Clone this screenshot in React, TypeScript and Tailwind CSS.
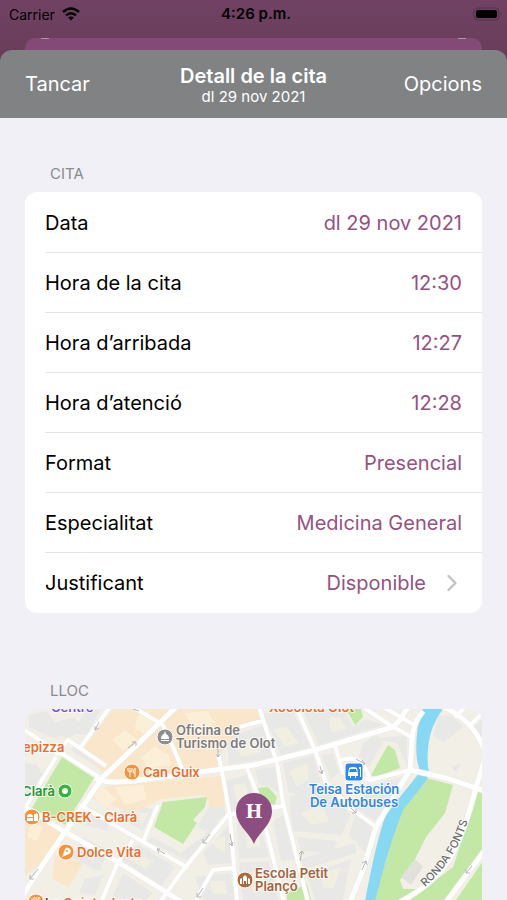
import { ChevronRight } from 'lucide-react';

interface Detail {
  label: string;
  value: string;
  link?: boolean;
}

const details: Detail[] = [
  { label: 'Data', value: 'dl 29 nov 2021' },
  { label: 'Hora de la cita', value: '12:30' },
  { label: 'Hora d’arribada', value: '12:27' },
  { label: 'Hora d’atenció', value: '12:28' },
  { label: 'Format', value: 'Presencial' },
  { label: 'Especialitat', value: 'Medicina General' },
  { label: 'Justificant', value: 'Disponible', link: true },
];

const commercial = [
  'M88 0H232L236 14 212 22 194 48 196 60 108 70 84 72 58 40Z',
  'M82 77 196 67 200 96 186 100 180 86 136 90 108 104 62 88Z',
  'M0 102 32 118 37 126 14 156 0 166Z',
  'M30 146 58 154 44 178 27 170Z',
];

const commercialLight = [
  'M112 8 122 2 132 14 122 26 110 20Z',
  'M88 30 100 22 112 30 98 42Z',
  'M116 48 130 38 144 46 146 56 122 60Z',
  'M160 4 182 2 190 14 170 24Z',
  'M90 78 118 76 122 90 100 96Z',
  'M64 84 78 78 92 90 82 98Z',
  'M6 114 18 118 12 132 2 128Z',
];

const buildings = [
  'M4 6 22 2 30 14 48 8 60 18 46 28 30 30 4 18Z',
  'M0 54 12 56 20 66 0 88Z',
  'M60 2 76 0 62 26 48 24Z',
  'M52 38 76 52 72 58 44 40Z',
  'M64 104 84 112 82 122 60 116Z',
  'M94 102 112 96 128 100 118 122 100 112Z',
  'M58 128 84 142 74 162 46 148Z',
  'M96 144 114 136 150 158 136 178 98 154Z',
  'M60 170 78 166 70 186 54 184Z',
  'M98 164 128 184 120 191H86Z',
  'M128 128 156 144 166 136 178 128 188 112 198 116 164 152 122 132Z',
  'M186 94 200 98 200 106 180 122 172 118Z',
  'M200 72 222 66 230 94 206 102Z',
  'M178 144 204 116 206 154 184 156Z',
  'M212 114 234 112 244 148 214 150Z',
  'M170 168 188 166 206 164 210 191H178Z',
  'M214 154 244 152 254 191H218Z',
  'M238 4 268 2 286 38 256 46Z',
  'M202 28 240 16 250 48 204 56Z',
  'M278 2 318 0 328 18 340 10 358 16 294 36Z',
  'M230 60 250 58 256 86 246 78 234 76Z',
  'M258 54 288 46 296 72 278 86 264 84Z',
  'M296 46 308 44 314 64 306 70Z',
  'M264 88 298 76 326 106 316 126 268 122Z',
  'M330 106 350 120 340 144 324 126Z',
  'M346 76 376 68 366 90 350 112 330 98Z',
  'M272 128 312 132 308 144 276 142Z',
  'M276 150 330 134 332 144 280 160Z',
  'M282 166 326 150 318 191H290Z',
  'M248 112 258 106 270 150 256 152Z',
  'M346 30 382 26 382 56 372 34 360 32Z',
  'M338 34 352 26 358 34 344 58 334 46Z',
  'M414 6 428 8 438 18 418 34 408 26Z',
  'M444 22 458 34V10Z',
  'M426 58 436 54 432 64Z',
];

const yards = [
  'M22 30 40 26 36 36Z',
  'M14 62 26 52 22 68Z',
  'M112 104 124 104 116 118Z',
  'M62 132 76 140 68 152 56 142Z',
  'M108 142 128 152 120 160 104 150Z',
  'M208 76 220 74 224 88 212 92Z',
  'M186 134 200 126 200 144Z',
  'M220 122 232 118 236 136 222 140Z',
  'M210 34 228 28 236 44 216 48Z',
  'M248 20 262 18 274 34 260 38Z',
  'M304 8 314 8 322 20 306 24Z',
  'M264 62 282 54 284 70 272 78Z',
  'M276 104 296 96 304 112 286 116Z',
  'M296 164 316 158 308 180 298 178Z',
  'M184 172 200 172 202 186 188 184Z',
  'M224 164 238 160 244 180 228 184Z',
];

const parks = [
  'M37 48 69 69 40 116 7 99Z',
  'M138 93 182 88 180 98 168 111 172 114 158 135 129 118Z',
  'M321 0 330 16 338 8 336 0Z',
  'M346 66 363 36 370 41 375 59 350 68Z',
  'M232 79 243 78 252 88 250 95 238 96Z',
  'M262 184 282 175 286 191H262Z',
  'M401 69 428 76 420 104 401 128 388 154 375 171 378 180 392 180 374 191H345L362 150 370 110Z',
  'M453 83 458 84V141L421 191H385L428 158Z',
  'M458 152V191H431Z',
];

const roads = [
  'M-2 20 25 38 36 44 74 68',
  'M31 46 43 31 81 57',
  'M-2 102 31 48',
  'M108 -2 138 16 148 38 158 62',
  'M55 39 85 -2',
  'M55 96 103 124 163 159',
  'M133 96 118 133',
  'M108 131 93 153 77 191',
  'M193 44 198 68 205 108 212 193',
  'M258 97 203 106 158 161 135 193',
  'M208 159 188 161 170 193',
  'M222 59 232 84 242 124 259 193',
  'M234 -2 252 54 258 94 283 193',
  'M215 18 240 11',
  'M271 -2 290 41 301 74 328 101 351 118',
  'M310 36 318 64 345 71 385 61',
  'M316 51Q338 44 345 71',
  'M338 -2 365 16 388 29',
  'M358 -2 391 17',
  'M430 8 440 -2M443 18 460 2',
];

const mainRoads = [
  'M-2 186 12 164 40 123 78 68 115 33 151 -2',
  'M0 98 40 123 93 153 157 193',
  'M70 69Q78 75 108 72L175 63 229 56 290 41 368 18 375 11 383 -2',
  'M398 2Q388 14 387 30L385 61 371 84 351 118 338 161 325 193',
  'M385 61 421 69 460 82',
  'M418 -2Q448 10 460 42',
  'M460 50 451 78Q442 116 428 144T375 193',
  'M460 141 421 193',
];

const arrows = [
  'M74 13 70 21M70 17V21L74 19',
  'M103 39 111 33M107 33H111V37',
  'M114 2 108 0M193 38V48M191 45 193 48 195 45',
  'M132 140 140 145M135 140 132 140 134 144',
  'M185 125 178 134M178 130V134H182',
  'M205 125 207 137M204 134 207 137 208 133',
  'M13 160 5 170M5 166V170H9',
  'M178 179 172 188M172 184V188H176',
  'M295 57 297 65M294 62 297 65 298 61',
  'M275 152 277 142M274 145 277 142 279 145',
  'M326 99 331 104M331 100V104H327',
  'M337 161 341 152M337 154 341 152 342 156',
  'M331 50 340 55M337 51 340 55 335 56',
  'M447 157 441 164M441 160V164H445',
];

function WifiIcon() {
  return (
    <svg width="18" height="14" viewBox="0 0 18 14" fill="none" stroke="black" strokeWidth="2.4">
      <path d="M1 5Q9 -2 17 5" />
      <path d="M4 8.400Q9 4 14 8.400" />
      <path d="M9 13.500 6.200 10.600Q9 8.300 11.800 10.600Z" fill="black" stroke="none" />
    </svg>
  );
}

function BatteryIcon() {
  return (
    <svg width="30" height="14" viewBox="0 0 30 14">
      <rect x="1" y="1" width="25" height="12" rx="4" fill="none" stroke="#553049" strokeWidth="1" />
      <rect x="3" y="3" width="21" height="8" rx="2" fill="black" />
      <path d="M27.500 5Q29.500 7 27.500 9Z" fill="#553049" />
    </svg>
  );
}

function StatusBar() {
  return (
    <div className="grid h-7 grid-cols-[1fr_auto_1fr] items-center pr-1 pl-[9px] text-[14px] text-black">
      <div className="flex items-center gap-[7px]">
        <span>Carrier</span>
        <WifiIcon />
      </div>
      <span className="text-[15px] font-semibold">4:26 p.m.</span>
      <div className="flex justify-end">
        <BatteryIcon />
      </div>
    </div>
  );
}

function LocationMap() {
  return (
    <svg
      className="block h-full w-full"
      viewBox="0 0 457 191"
      preserveAspectRatio="xMidYMin slice"
      role="img"
      aria-label="Mapa"
    >
      <rect width="460" height="400" fill="#f2efe7" />
      <path d={buildings.join('')} fill="#e8e8e7" />
      <path d={yards.join('')} fill="#f1eee2" />
      <path d={commercial.join('')} fill="#fae6ca" />
      <path d={commercialLight.join('')} fill="#fcefd8" />
      <path d={parks.join('')} fill="#c3e8a6" />
      <path d="M376 168 390 150 398 158 386 176Z" fill="#e2e0da" />
      <path
        d="M398 -1Q389 24 392 51L395 63 375 88 361 106Q352 128 340 192H350Q358 160 368 128L378 101 401 72Q405 66 403 58 400 22 419 -1Z"
        fill="#87d8f3"
      />

      <g fill="none" strokeLinejoin="round">
        <path d={roads.join('')} stroke="#e9e8e5" strokeWidth="5" />
        <path d={mainRoads.join('')} stroke="#e9e8e5" strokeWidth="6" />
        <path d={roads.join('')} stroke="white" strokeWidth="4" />
        <path d={mainRoads.join('')} stroke="white" strokeWidth="5" />
        <path d={arrows.join('')} stroke="#b4b4b4" strokeWidth="1" />
      </g>

      <g className="text-[13px] font-semibold" stroke="white" strokeWidth="2" strokeOpacity="0.7" paintOrder="stroke">
        <text x="26" y="3" fill="#7d4df2">Centre</text>
        <text x="244" y="3" fill="#ee6c26">Xocolota Olot</text>
        <text x="-2" y="43" fill="#ee6c26">epizza</text>
        <text x="118" y="68" fill="#ee6c26">Can Guix</text>
        <text x="17" y="113" fill="#ee6c26">B-CREK - Clarà</text>
        <text x="52" y="148" fill="#ee6c26">Dolce Vita</text>
        <text x="20" y="199" fill="#ee6c26"><tspan fill="#704226">La</tspan> Quinta Justa</text>
        <text x="30" y="87" fill="#26972f" textAnchor="end">Clarà</text>
        <text x="151" y="26" fill="#7c7c7e">Oficina de</text>
        <text x="151" y="39" fill="#7c7c7e">Turismo de Olot</text>
        <text x="329" y="85" fill="#2f85ea" textAnchor="middle">Teisa Estación</text>
        <text x="329" y="98" fill="#2f85ea" textAnchor="middle">De Autobuses</text>
        <text x="230" y="169" fill="#a5623a">Escola Petit</text>
        <text x="230" y="182" fill="#a5623a">Plançó</text>
      </g>

      <path id="ronda" d="M400 178Q432 150 444 108" fill="none" />
      <text className="text-[11px] font-medium" fill="#6b6b6b" stroke="white" strokeWidth="1" paintOrder="stroke">
        <textPath href="#ronda">RONDA FONTS</textPath>
      </text>

      <g stroke="white" strokeWidth="1">
        <circle cx="107" cy="63" r="8" fill="#f8933a" />
        <circle cx="7" cy="108" r="8" fill="#f8933a" />
        <circle cx="41" cy="143" r="8" fill="#f8933a" />
        <circle cx="11" cy="193" r="8" fill="#f8933a" />
        <circle cx="140" cy="28" r="8" fill="#8e8e90" />
        <circle cx="220" cy="171" r="8" fill="#ac6a3c" />
        <circle cx="40" cy="82" r="7" fill="#35b53c" />
        <rect x="320" y="54" width="18" height="18" rx="3" fill="#2d87f0" />
      </g>
      <circle cx="40" cy="82" r="3" fill="white" />

      {/* fork and knife */}
      <g stroke="white" strokeWidth="1" fill="none">
        <path d="M103 59V62Q105 64 107 62V59M105 59V68M110 68V59Q108 61 108 64H110" />
        <path d="M7 189V192Q9 194 11 192V188M9 188V198M14 198V188Q12 190 12 194H14" />
      </g>
      {/* burger and cup */}
      <path d="M2 108Q2 105 5 105T8 108ZM2 109H8V112H2ZM9 105H11L12 103V105H13V112H9Z" fill="white" />
      {/* pizza slice */}
      <path d="M37 148 40 140Q42 137 45 140 47 143 44 145Z" fill="white" />
      <circle cx="42" cy="142" r="1" fill="#f8933a" />
      {/* tourist office */}
      <path d="M140 22 141 25Q144 26 144 30H136Q136 26 139 25ZM136 31H144V32H136Z" fill="white" />
      {/* school */}
      <path
        d="M215 170 217 169V175H215ZM218 168 220 166 222 168V175H221V172H219V175H218ZM223 169 225 170V175H223Z"
        fill="white"
      />
      {/* bus */}
      <path
        d="M324 59Q328 57 332 59L333 65V67H331V69H330V67H326V69H325V67H323V65ZM325 60 324 63H332L331 60ZM334 58H336V68H335V60H334Z"
        fill="white"
        fillRule="evenodd"
      />

      <path
        d="M229 135C225 124 211 116 211 102A18 18 0 0 1 247 102C247 116 233 124 229 135Z"
        fill="#8e4d80"
      />
      <text
        x="229"
        y="109"
        textAnchor="middle"
        fill="white"
        className="font-['DejaVu_Serif',serif] text-[18px] font-bold"
      >
        H
      </text>
    </svg>
  );
}

export default function App() {
  return (
    <div className="flex h-screen flex-col overflow-hidden bg-[#f1f0f6] font-['Inter','Liberation_Sans',sans-serif]">
      <header className="bg-linear-to-b from-[#704163] to-[#623951]">
        <StatusBar />
        <div className="mx-[25px] mt-[10px] flex h-3 justify-between rounded-t-[10px] bg-[#834a77] px-4">
          <span className="h-px w-2 rounded-full bg-[#b597ad]" />
          <span className="h-px w-2 rounded-full bg-[#b597ad]" />
        </div>
        <nav className="grid h-[68px] grid-cols-[1fr_auto_1fr] items-center rounded-t-[12px] bg-[#808284] px-[25px] text-[20px] text-white">
          <button className="justify-self-start">Tancar</button>
          <div className="pt-px text-center">
            <h1 className="leading-6 font-semibold">Detall de la cita</h1>
            <p className="text-[15px] leading-[18px]">dl 29 nov 2021</p>
          </div>
          <button className="justify-self-end">Opcions</button>
        </nav>
      </header>

      <main className="flex min-h-0 flex-1 flex-col px-[25px] pt-[46px]">
        <section>
          <h2 className="mb-2 pl-[25px] text-[15px] leading-5 text-[#8a8a8f]">CITA</h2>
          <ul className="rounded-[12px] bg-white pt-px pl-5">
            {details.map((detail) => (
              <li key={detail.label} className="border-b border-[#e4e4e6] text-[20px] last:border-b-0">
                {detail.link ? (
                  <button className="flex h-[60px] w-full items-center pr-5">
                    <span>{detail.label}</span>
                    <span className="ml-auto text-[#95527f]">{detail.value}</span>
                    <ChevronRight size={28} strokeWidth={2} className="-mr-1 ml-3 text-[#c2c2c5]" />
                  </button>
                ) : (
                  <div className="flex h-[59px] items-center justify-between pr-5">
                    <span>{detail.label}</span>
                    <span className="text-[#95527f]">{detail.value}</span>
                  </div>
                )}
              </li>
            ))}
          </ul>
        </section>

        <section className="mt-[68px] flex min-h-0 flex-1 flex-col">
          <h2 className="mb-2 pl-[25px] text-[15px] leading-5 text-[#8a8a8f]">LLOC</h2>
          <div className="min-h-0 flex-1 overflow-hidden rounded-t-[12px]">
            <LocationMap />
          </div>
        </section>
      </main>
    </div>
  );
}
